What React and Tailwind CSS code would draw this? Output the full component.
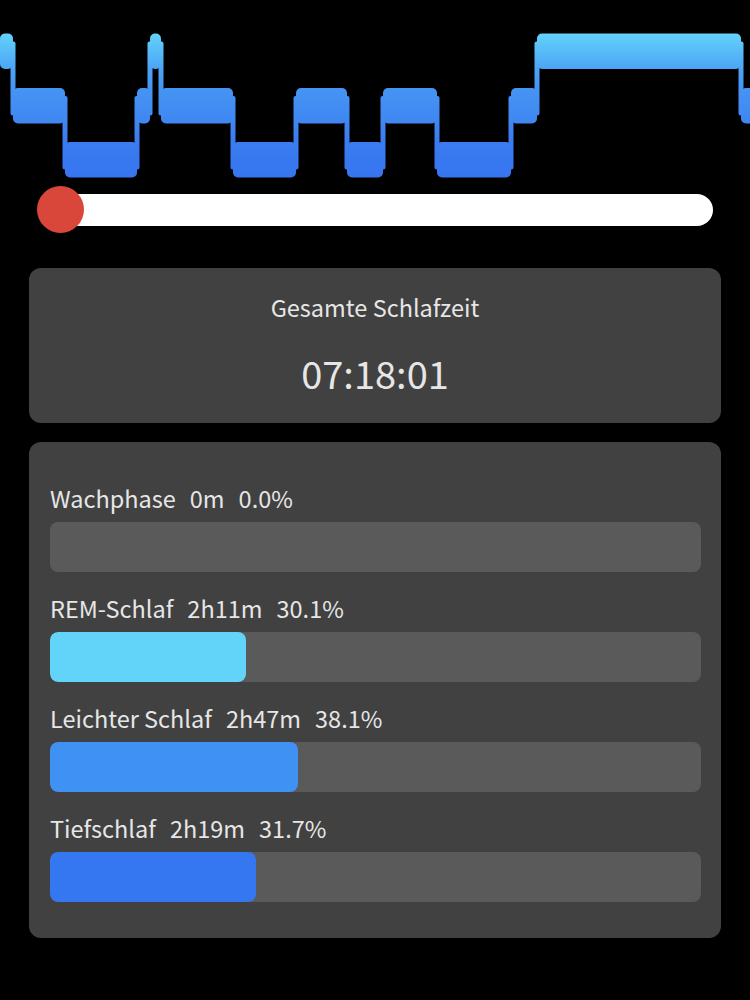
import React from 'react'

const LEVELS = { A: 33.5, B: 88, C: 142 } // band top y
const BAND = 35.5

// hypnogram segments: [from, to, level]
const segments = [
    [0, 13, 'A'],
    [13, 65, 'B'],
    [65, 137, 'C'],
    [137, 150, 'B'],
    [150, 161, 'A'],
    [161, 233, 'B'],
    [233, 296, 'C'],
    [296, 347, 'B'],
    [347, 383, 'C'],
    [383, 437, 'B'],
    [437, 511, 'C'],
    [511, 537, 'B'],
    [537, 741, 'A'],
    [741, 760, 'B'],
]

const Hypnogram = () => {
    const connectors = segments.slice(1).map((s, i) => {
        const prev = segments[i]
        const y1 = Math.min(LEVELS[prev[2]], LEVELS[s[2]])
        const y2 = Math.max(LEVELS[prev[2]], LEVELS[s[2]]) + BAND
        return { x: s[0], y1, y2 }
    })

    return (
        <svg width="750" height="186" viewBox="0 0 750 186" className="block">
            <defs>
                <linearGradient id="sleep" x1="0" y1="33" x2="0" y2="178" gradientUnits="userSpaceOnUse">
                    <stop offset="0" stopColor="#63d3fb" />
                    <stop offset="0.25" stopColor="#4ca4f5" />
                    <stop offset="0.38" stopColor="#4594f3" />
                    <stop offset="0.62" stopColor="#3f86f1" />
                    <stop offset="0.75" stopColor="#3b7cf0" />
                    <stop offset="1" stopColor="#3675ef" />
                </linearGradient>
            </defs>
            {segments.map(([a, b, lv], i) => (
                <rect key={i} x={a} y={LEVELS[lv]} width={b - a} height={BAND} rx="5" fill="url(#sleep)" />
            ))}
            {connectors.map((c, i) => (
                <rect key={'c' + i} x={c.x - 2.5} y={c.y1 + 8} width="5" height={c.y2 - c.y1 - 16} rx="2" fill="url(#sleep)" />
            ))}
        </svg>
    )
}

const stages = [
    { label: 'Wachphase', time: '0m', pct: 0, pctText: '0.0%', color: 'bg-[#f2a33a]' },
    { label: 'REM-Schlaf', time: '2h11m', pct: 30.1, pctText: '30.1%', color: 'bg-[#62d4fa]' },
    { label: 'Leichter Schlaf', time: '2h47m', pct: 38.1, pctText: '38.1%', color: 'bg-[#3f92f3]' },
    { label: 'Tiefschlaf', time: '2h19m', pct: 31.7, pctText: '31.7%', color: 'bg-[#3577f0]' },
]

export default function App() {
    return (
        <div
            className="w-[750px] h-[1000px] bg-black text-[#e6e6e6] overflow-hidden"
            style={{ fontFamily: '"Noto Sans CJK JP", "Noto Sans", sans-serif' }}
        >
            <Hypnogram />

            {/* playback slider */}
            <div className="relative h-[47px] pt-[8px]">
                <div className="ml-[50px] mr-[37px] h-[32px] rounded-full bg-white" />
                <div className="absolute left-[37px] top-0 w-[47px] h-[47px] rounded-full bg-[#d9473a]" />
            </div>

            <div className="mx-[29px] mt-[35px] flex flex-col gap-[19px]">
                <div className="h-[155px] rounded-[12px] bg-[#414141] flex flex-col items-center pt-[24px]">
                    <div className="text-[23.5px] leading-[30px]">Gesamte Schlafzeit</div>
                    <div className="mt-[26px] text-[38px] leading-[50px]">07:18:01</div>
                </div>

                <div className="h-[496px] rounded-[12px] bg-[#414141] pt-[41px] pl-[21px] pr-[20px] flex flex-col gap-[21px]">
                    {stages.map((s) => (
                        <div key={s.label} className="flex flex-col gap-[9px]">
                            <div className="flex gap-[14px] text-[23.5px] leading-[30px]">
                                <span>{s.label}</span>
                                <span>{s.time}</span>
                                <span>{s.pctText}</span>
                            </div>
                            <div className="h-[50px] rounded-[8px] bg-[#5a5a5a] overflow-hidden">
                                <div className={`h-full rounded-[8px] ${s.color}`} style={{ width: `${s.pct}%` }} />
                            </div>
                        </div>
                    ))}
                </div>
            </div>
        </div>
    )
}
